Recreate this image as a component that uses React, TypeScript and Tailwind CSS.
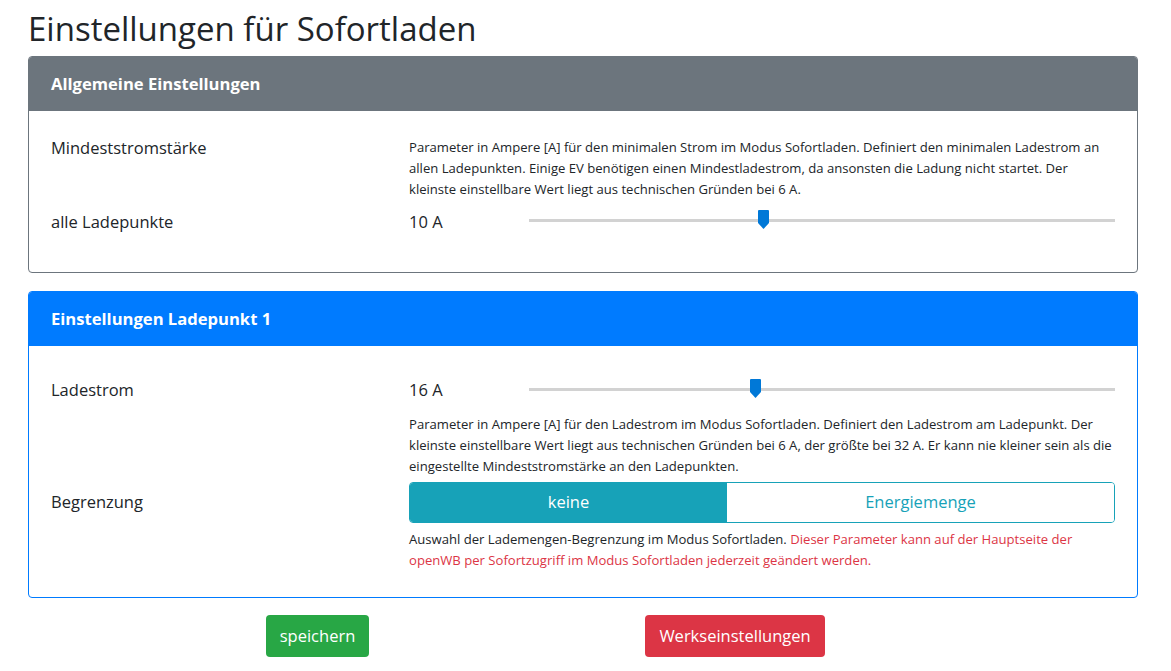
import React from "react";

const font = { fontFamily: '"Open Sans", "Noto Sans", Arial, sans-serif' };

function Slider({ thumb, lift }: { thumb: string; lift: string }) {
  return (
    <div className={`relative h-[20px] flex-1 ${lift}`}>
      <div className="absolute left-0 right-0 top-[9px] h-[3px] bg-[#d2d2d2]" />
      <svg
        className={`absolute top-0 ${thumb}`}
        width="11"
        height="19"
        viewBox="0 0 11 19"
      >
        <path d="M1 0 H10 Q11 0 11 1 V13 L5.5 19 L0 13 V1 Q0 0 1 0 Z" fill="#0078d7" />
      </svg>
    </div>
  );
}

export default function App() {
  return (
    <div className="min-h-screen bg-white text-[#212529]" style={font}>
      <div className="w-[1110px] ml-[28px]">
        <h1 className="text-[33px] font-normal leading-[50px] pt-[4px] mb-[2px]">
          Einstellungen für Sofortladen
        </h1>

        <div className="border border-[#6c757d] rounded-[4px] overflow-hidden">
          <div className="h-[54px] bg-[#6c757d] px-[22px] flex items-center text-white font-bold text-[16.6px]">
            Allgemeine Einstellungen
          </div>
          <div className="px-[22px] pt-[26px] pb-[29px]">
            <div className="grid grid-cols-[358px_1fr]">
              <div className="text-[16.5px] leading-[21px]">Mindeststromstärke</div>
              <p className="text-[13.1px] leading-[21px]">
                Parameter in Ampere [A] für den minimalen Strom im Modus Sofortladen. Definiert den minimalen
                Ladestrom an allen Ladepunkten. Einige EV benötigen einen Mindestladestrom, da ansonsten die
                Ladung nicht startet. Der kleinste einstellbare Wert liegt aus technischen Gründen bei 6 A.
              </p>
            </div>
            <div className="grid grid-cols-[358px_1fr] h-[42px] mt-[1px] items-center">
              <div className="text-[16.5px]">alle Ladepunkte</div>
              <div className="flex items-center">
                <div className="w-[120px] text-[16.5px]">10 A</div>
                <Slider thumb="left-[229px]" lift="-mt-[4px]" />
              </div>
            </div>
          </div>
        </div>

        <div className="mt-[18px] border border-[#007bff] rounded-[4px] overflow-hidden">
          <div className="h-[54px] bg-[#007bff] px-[22px] flex items-center text-white font-bold text-[16.6px]">
            Einstellungen Ladepunkt 1
          </div>
          <div className="px-[22px] pt-[23px] pb-[26px]">
            <div className="grid grid-cols-[358px_1fr] h-[42px] items-center">
              <div className="text-[16.5px]">Ladestrom</div>
              <div className="flex items-center">
                <div className="w-[120px] text-[16.5px]">16 A</div>
                <Slider thumb="left-[221px]" lift="-mt-[2px]" />
              </div>
            </div>
            <div className="grid grid-cols-[358px_1fr] mt-[3px]">
              <div />
              <p className="text-[13.1px] leading-[21px]">
                Parameter in Ampere [A] für den Ladestrom im Modus Sofortladen. Definiert den Ladestrom am
                Ladepunkt. Der kleinste einstellbare Wert liegt aus technischen Gründen bei 6 A, der größte bei
                32 A. Er kann nie kleiner sein als die eingestellte Mindeststromstärke an den Ladepunkten.
              </p>
            </div>
            <div className="grid grid-cols-[358px_1fr] mt-[5px] items-center">
              <div className="text-[16.5px]">Begrenzung</div>
              <div className="flex h-[41px] border border-[#17a2b8] rounded-[4px] overflow-hidden text-[16.5px]">
                <button className="w-[317px] bg-[#17a2b8] text-white">keine</button>
                <button className="flex-1 bg-white text-[#17a2b8]">Energiemenge</button>
              </div>
            </div>
            <div className="grid grid-cols-[358px_1fr] mt-[6px]">
              <div />
              <p className="text-[13.1px] leading-[21px]">
                Auswahl der Lademengen-Begrenzung im Modus Sofortladen.{" "}
                <span className="text-[#dc3545]">
                  Dieser Parameter kann auf der Hauptseite der openWB per Sofortzugriff im Modus Sofortladen
                  jederzeit geändert werden.
                </span>
              </p>
            </div>
          </div>
        </div>

        <div className="flex mt-[17px] pl-[238px] gap-[276px]">
          <button className="h-[42px] w-[103px] rounded-[4px] bg-[#28a745] text-white text-[16.5px]">
            speichern
          </button>
          <button className="h-[42px] w-[180px] rounded-[4px] bg-[#dc3545] text-white text-[16.5px]">
            Werkseinstellungen
          </button>
        </div>
      </div>
    </div>
  );
}
